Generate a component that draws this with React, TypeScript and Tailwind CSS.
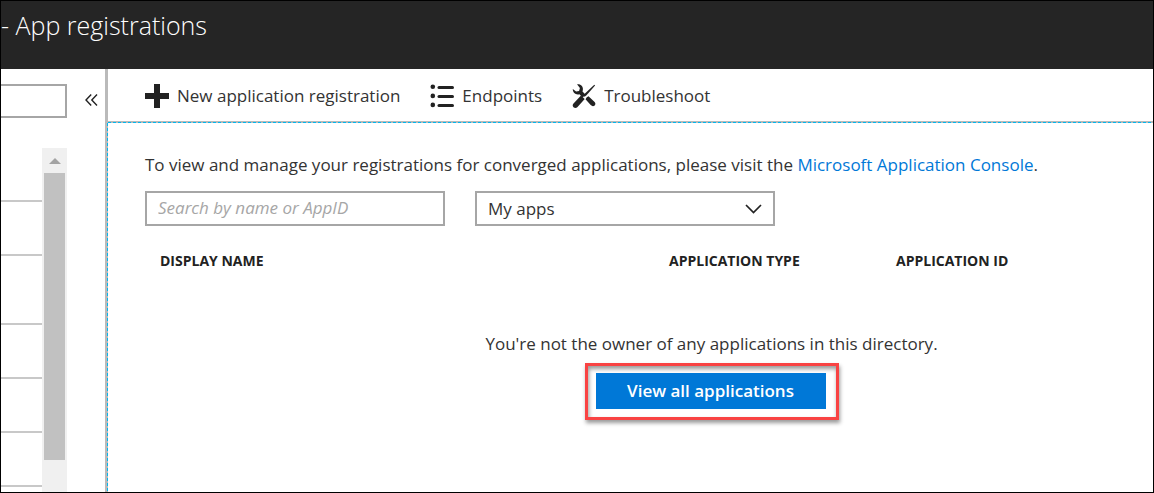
import React from 'react';

const columns = [
  { label: 'DISPLAY NAME', width: 'w-[509px]' },
  { label: 'APPLICATION TYPE', width: 'w-[227px]' },
  { label: 'APPLICATION ID', width: '' },
];

const menuRowHeights = ['h-[54px]', 'h-[54px]', 'h-[69px]', 'h-[54px]', 'h-[54px]', 'h-[54px]'];

function PlusIcon() {
  return (
    <svg width="24" height="24" viewBox="0 0 24 24" fill="#222" aria-hidden="true">
      <path d="M9 0h6v9h9v6h-9v9H9v-9H0V9h9z" />
    </svg>
  );
}

function ListIcon() {
  return (
    <svg width="24" height="24" viewBox="0 0 24 24" fill="#222" aria-hidden="true">
      <circle cx="2.8" cy="2.7" r="2.3" />
      <circle cx="2.8" cy="11.9" r="2.3" />
      <circle cx="2.8" cy="20.9" r="2.3" />
      <rect x="7.500" y="2" width="16.500" height="3" rx="1.5" />
      <rect x="7.500" y="11" width="16.500" height="3" rx="1.5" />
      <rect x="7.500" y="20" width="16.500" height="3" rx="1.5" />
    </svg>
  );
}

function ToolsIcon() {
  return (
    <svg width="24" height="24" viewBox="0 0 24 24" aria-hidden="true">
      <path
        d="M5 .2C8.300-.3 11.200 2 10.900 5.300c0 .9-.2 1.500-.4 2.100l3.100 3.300-3 2.800-3.200-3.300C3.800 11.200.6 8.700.8 4.900l3.300 2.700 3-.7.800-2.900z"
        fill="#222"
      />
      <path d="M14.800 13.200l1.700-1 5.600 5.200c1.500 1.400 1.700 2.800.6 4s-2.600 1.100-4-.3l-5.200-5.800z" fill="#222" />
      <path d="M22.300.7l.8.800-8.600 9.700-1.900 1.500-1.300-1.200 1.400-1.700z" fill="#222" />
      <path d="M9 11.600l3.700 3.500-7.400 8.100c-1.100 1.100-2.700 1-3.800 0s-1.100-2.700 0-3.800z" fill="#222" />
    </svg>
  );
}

function ToolbarButton({ icon, label }: { icon: React.ReactNode; label: string }) {
  return (
    <button type="button" className="flex items-center gap-2 whitespace-nowrap">
      {icon}
      <span>{label}</span>
    </button>
  );
}

function SideMenu() {
  return (
    <aside className="flex w-[104px] shrink-0 flex-col">
      <div className="flex items-center pt-[15px]">
        <input
          type="text"
          aria-label="Search menu"
          className="h-[34px] w-[66px] border-2 border-l-0 border-[#a6a6a6] bg-white px-2 outline-none"
        />
        <button type="button" aria-label="Collapse menu" className="ml-[18px] pb-0.5">
          <svg width="13" height="12" viewBox="0 0 13 12" fill="none" stroke="#222" strokeWidth="1.400" aria-hidden="true">
            <path d="M6.200.500L1 6l5.200 5.500M12 .500L6.800 6l5.200 5.500" />
          </svg>
        </button>
      </div>
      <div className="mt-[30px] flex w-[66px] grow">
        <div className="grow">
          {menuRowHeights.map((height, i) => (
            <div key={i} className={`${height} border-b-2 border-[#c8c8c8]`} />
          ))}
        </div>
        <div className="flex w-[25px] flex-col items-center bg-[#f0f0f0]">
          <div className="flex h-[25px] items-center">
            <svg width="12" height="6" viewBox="0 0 12 6" fill="#a3a3a3" aria-hidden="true">
              <path d="M6 0l6 6H0z" />
            </svg>
          </div>
          <div className="h-[287px] w-[21px] bg-[#c1c1c1]" />
        </div>
      </div>
    </aside>
  );
}

export default function App() {
  return (
    <div className="flex min-h-screen flex-col border border-black bg-white font-['Open_Sans','Noto_Sans',sans-serif] text-[17px] leading-6 text-[#333]">
      <header className="h-[68px] bg-[#252525]">
        <h1 className="pt-2 text-[25px] leading-8 font-light text-white">- App registrations</h1>
      </header>
      <div className="flex grow">
        <SideMenu />
        <div className="flex w-[3px] shrink-0 flex-col bg-[#bababa]">
          <div className="mt-[54px] w-px grow self-end bg-[repeating-linear-gradient(to_bottom,#00b7f0_0_3px,#bababa_3px_5px)]" />
        </div>
        <main className="min-w-0 grow">
          <div className="flex h-[52px] items-center gap-[30px] pt-px pl-[37px]">
            <ToolbarButton icon={<PlusIcon />} label="New application registration" />
            <ToolbarButton icon={<ListIcon />} label="Endpoints" />
            <ToolbarButton icon={<ToolsIcon />} label="Troubleshoot" />
          </div>
          <div className="h-px bg-[#bababa]" />
          <div className="h-px bg-[repeating-linear-gradient(to_right,#00b7f0_0_3px,#bababa_3px_5px)]" />

          <div className="pt-[30px] pl-[37px]">
            <p>
              To view and manage your registrations for converged applications, please visit the{' '}
              <a href="#console" className="text-[#0078d7]">
                Microsoft Application Console
              </a>
              .
            </p>
            <div className="mt-[14px] flex gap-[30px]">
              <input
                type="text"
                aria-label="Search by name or AppID"
                placeholder="Search by name or AppID"
                className="h-[35px] w-[300px] border-2 border-[#a6a6a6] bg-white px-[11px] pb-0.5 outline-none placeholder:text-[#a6a6a6] placeholder:italic"
              />
              <div className="relative w-[300px]">
                <select
                  aria-label="Filter applications"
                  className="h-[35px] w-full appearance-none border-2 border-[#a6a6a6] bg-white px-[11px] outline-none"
                >
                  <option>My apps</option>
                </select>
                <svg
                  className="pointer-events-none absolute top-[13px] right-[13px]"
                  width="17"
                  height="10"
                  viewBox="0 0 17 10"
                  fill="none"
                  stroke="#222"
                  strokeWidth="1.700"
                  aria-hidden="true"
                >
                  <path d="M1 1l7.500 7.500L16 1" />
                </svg>
              </div>
            </div>

            <table className="mt-[23px] w-full table-fixed">
              <thead>
                <tr>
                  {columns.map((column) => (
                    <th
                      key={column.label}
                      scope="col"
                      className={`${column.width} pl-[15px] text-left text-sm leading-6 font-bold text-[#222]`}
                    >
                      {column.label}
                    </th>
                  ))}
                </tr>
              </thead>
              <tbody>
                <tr>
                  <td colSpan={3} className="pt-[59px] pl-[125px] text-center">
                    <p>You're not the owner of any applications in this directory.</p>
                    <div className="mt-[7px] inline-block border-3 border-[#f94343] pt-[7px] pr-[10px] pb-2 pl-2 shadow-[1px_3px_4px_rgba(0,0,0,0.4),inset_1px_3px_4px_rgba(0,0,0,0.4)]">
                      <button type="button" className="block h-9 w-[230px] bg-[#0078d7] font-semibold text-white">
                        View all applications
                      </button>
                    </div>
                  </td>
                </tr>
              </tbody>
            </table>
          </div>
        </main>
      </div>
    </div>
  );
}
